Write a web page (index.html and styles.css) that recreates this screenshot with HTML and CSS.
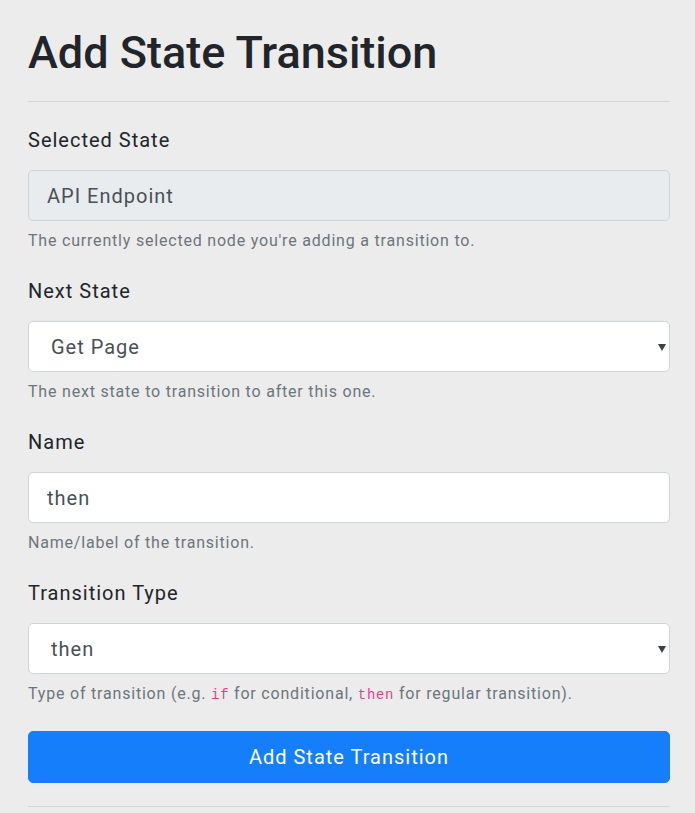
FILE: index.html
```html
<!DOCTYPE html>
<html lang="en">
<head>
<meta charset="utf-8">
<title>Add State Transition</title>
<link rel="stylesheet" href="styles.css">
</head>
<body>
<main class="page">
  <h1 class="title">Add State Transition</h1>
  <hr class="rule">
  <form class="form">
    <div class="group">
      <label class="label" for="sel-state">Selected State</label>
      <input class="control" id="sel-state" type="text" value="API Endpoint" disabled>
      <small class="help">The currently selected node you're adding a transition to.</small>
    </div>
    <div class="group">
      <label class="label" for="next-state">Next State</label>
      <div class="select-wrap">
        <select class="control select" id="next-state">
          <option>Get Page</option>
        </select>
        <svg class="caret" width="8" height="7" viewBox="0 0 8 7" aria-hidden="true"><path d="M0 0H8L4 7Z" fill="#3c4044"/></svg>
      </div>
      <small class="help">The next state to transition to after this one.</small>
    </div>
    <div class="group">
      <label class="label" for="name">Name</label>
      <input class="control" id="name" type="text" value="then">
      <small class="help">Name/label of the transition.</small>
    </div>
    <div class="group">
      <label class="label" for="type">Transition Type</label>
      <div class="select-wrap">
        <select class="control select" id="type">
          <option>then</option>
        </select>
        <svg class="caret" width="8" height="7" viewBox="0 0 8 7" aria-hidden="true"><path d="M0 0H8L4 7Z" fill="#3c4044"/></svg>
      </div>
      <small class="help">Type of transition (e.g. <code class="code">if</code> for conditional, <code class="code">then</code> for regular transition).</small>
    </div>
    <button class="btn" type="button">Add State Transition</button>
  </form>
  <hr class="rule rule-bottom">
</main>
</body>
</html>
```

FILE: styles.css
```css
* { box-sizing: border-box; }

html, body {
  margin: 0;
  padding: 0;
  background: #ececec;
}

body {
  font-family: Roboto, "Liberation Sans", Arial, sans-serif;
  color: #212529;
}

.page {
  padding: 0 25px 0 28px;
}

.title {
  margin: 25px 0 0;
  font-size: 45px;
  line-height: 55px;
  font-weight: 500;
  color: #212529;
}

.rule {
  margin: 21px 0 23px;
  border: 0;
  border-top: 1px solid #d6d6d6;
  height: 0;
}

.rule-bottom {
  margin: 23px 0 0;
}

.form {
  display: flex;
  flex-direction: column;
}

.group {
  display: flex;
  flex-direction: column;
  margin-bottom: 23px;
}

.label {
  font-size: 20px;
  line-height: 30px;
  letter-spacing: 0.05em;
  margin-bottom: 15px;
  color: #212529;
}

.control {
  display: block;
  width: 100%;
  height: 51px;
  padding: 0 18px;
  font-family: Roboto, "Liberation Sans", Arial, sans-serif;
  font-size: 20px;
  letter-spacing: 0.05em;
  color: #495057;
  background: #fff;
  border: 1px solid #ced4da;
  border-radius: 5px;
  outline: none;
}

.control:disabled {
  background: #e9ecef;
  color: #495057;
  opacity: 1;
}

.select-wrap {
  position: relative;
}

.select {
  -webkit-appearance: none;
  appearance: none;
  padding-left: 22px;
}

.caret {
  position: absolute;
  right: 4px;
  top: 50%;
  margin-top: -3px;
  pointer-events: none;
}

.help {
  display: block;
  margin-top: 8px;
  font-size: 16px;
  line-height: 24px;
  letter-spacing: 0.05em;
  color: #6c757d;
}

.code {
  font-family: "Liberation Mono", "DejaVu Sans Mono", monospace;
  font-size: 14px;
  letter-spacing: 0.05em;
  color: #e83e8c;
}

.btn {
  display: block;
  width: 100%;
  height: 52px;
  margin-top: 1px;
  font-family: Roboto, "Liberation Sans", Arial, sans-serif;
  font-size: 20px;
  letter-spacing: 0.05em;
  color: #fff;
  background: #147efb;
  border: 1px solid #147efb;
  border-radius: 5px;
  cursor: pointer;
}
```
